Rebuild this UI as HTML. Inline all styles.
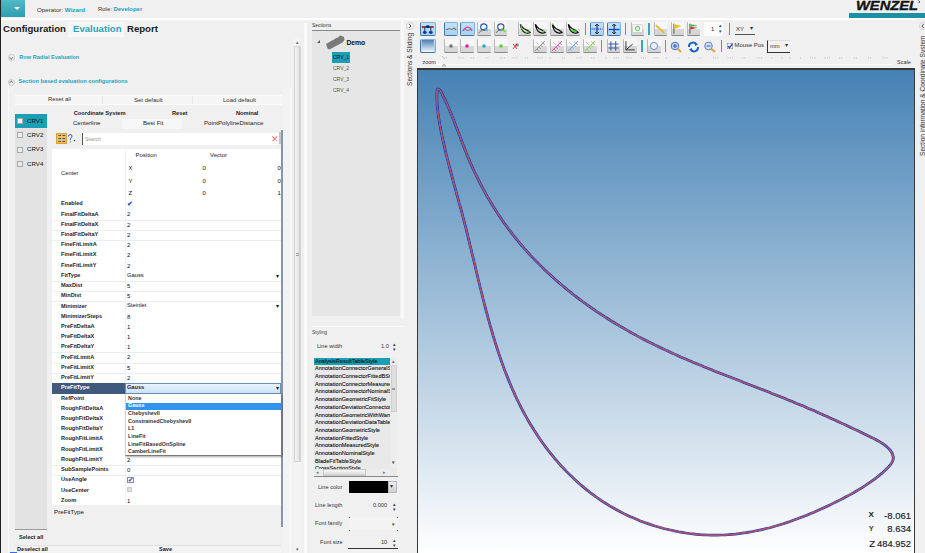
<!DOCTYPE html>
<html><head><meta charset="utf-8">
<style>
*{box-sizing:border-box;margin:0;padding:0}
html,body{width:925px;height:553px;overflow:hidden;background:#f0f0f0;font-family:"Liberation Sans",sans-serif;color:#222}
.a{position:absolute}
.t{position:absolute;white-space:nowrap;line-height:1}
</style></head><body>
<div class="a" style="left:0;top:0;width:925px;height:553px;overflow:hidden">
<div class="a" style="left:0px;top:0px;width:1px;height:553px;background:#202020"></div>
<div class="a" style="left:1px;top:0px;width:24px;height:17px;background:linear-gradient(#52b8c6,#2c9fb0)"></div>
<div class="a" style="left:14px;top:7px;width:0;height:0;border-left:3px solid transparent;border-right:3px solid transparent;border-top:3px solid #fff"></div>
<div class="t" style="left:37px;top:6.60px;font-size:6.2px;color:#333;">Operator: <span style="color:#1a9fb5;font-weight:bold">Wizard</span></div>
<div class="t" style="left:98px;top:6.72px;font-size:5.95px;color:#333;">Role: <span style="color:#1a9fb5;font-weight:bold">Developer</span></div>
<div class="a" style="left:1px;top:18px;width:924px;height:1.5px;background:#fff"></div>
<svg class="a" style="left:850px;top:0" width="75" height="12" viewBox="0 0 75 12"><text x="6" y="10.2" font-family="Liberation Sans" font-weight="bold" font-style="italic" font-size="12" textLength="62" lengthAdjust="spacingAndGlyphs" fill="#151515" stroke="#151515" stroke-width="0.35">WENZEL</text><path d="M68.5 0.5 Q70 1 69 3" stroke="#151515" stroke-width="0.9" fill="none"/></svg>
<div class="a" style="left:849px;top:12.5px;width:76px;height:5px;background:#1a90a5"></div>
<div class="a" style="left:68px;top:22px;width:56px;height:15px;background:#f7f7f7"></div>
<div class="t" style="left:3px;top:24.20px;font-size:9.6px;font-weight:bold;color:#1a1a1a;">Configuration</div>
<div class="t" style="left:73px;top:24.20px;font-size:9.6px;font-weight:bold;color:#2aa3b8;">Evaluation</div>
<div class="t" style="left:127px;top:24.20px;font-size:9.6px;font-weight:bold;color:#1a1a1a;">Report</div>
<div class="a" style="left:8px;top:54px;width:7px;height:7px;border:1px solid #c8c8c8;border-radius:50%"></div>
<div class="a" style="left:10.3px;top:55.5px;width:2.5px;height:2.5px;border-right:1px solid #888;border-bottom:1px solid #888;transform:rotate(45deg)"></div>
<div class="t" style="left:19.3px;top:54.70px;font-size:5.6px;font-weight:bold;color:#2aa3b8;">Row Radial Evaluation</div>
<div class="a" style="left:8px;top:78.5px;width:7px;height:7px;border:1px solid #c8c8c8;border-radius:50%"></div>
<div class="a" style="left:10.3px;top:81px;width:2.5px;height:2.5px;border-left:1px solid #888;border-top:1px solid #888;transform:rotate(45deg)"></div>
<div class="t" style="left:18.4px;top:79.25px;font-size:5.7px;font-weight:bold;color:#2aa3b8;">Section based evaluation configurations</div>
<div class="a" style="left:8px;top:88px;width:1.2px;height:465px;background:#f9f9f9"></div>
<div class="a" style="left:15px;top:94.7px;width:267px;height:10px;background:#f5f5f5;border-top:1px solid #fbfbfb;border-bottom:1px solid #fbfbfb"></div>
<div class="a" style="left:102px;top:96px;width:1px;height:8px;background:#e8e8e8"></div>
<div class="a" style="left:192px;top:96px;width:1px;height:8px;background:#e8e8e8"></div>
<div class="t" style="left:48px;top:97.05px;font-size:5.9px;color:#333;">Reset all</div>
<div class="t" style="left:134px;top:97.00px;font-size:6px;color:#333;">Set default</div>
<div class="t" style="left:223px;top:97.00px;font-size:6px;color:#333;">Load default</div>
<div class="a" style="left:15px;top:113.7px;width:32px;height:416px;background:#e3e3e3"></div>
<div class="a" style="left:15px;top:529.3px;width:32px;height:1px;background:#9a9a9a"></div>
<div class="a" style="left:15px;top:113.7px;width:32px;height:14.2px;background:#1a9fb5"></div>
<div class="a" style="left:16.9px;top:117.8px;width:6px;height:6px;border:1px solid #a8a8a8;background:#f4f4f4"></div>
<div class="t" style="left:27px;top:117.70px;font-size:6.2px;color:#111;">CRV1</div>
<div class="a" style="left:16.9px;top:131.7px;width:6px;height:6px;border:1px solid #a8a8a8;background:#ececec"></div>
<div class="t" style="left:27px;top:131.60px;font-size:6.2px;color:#111;">CRV2</div>
<div class="a" style="left:16.9px;top:146.5px;width:6px;height:6px;border:1px solid #a8a8a8;background:#ececec"></div>
<div class="t" style="left:27px;top:146.40px;font-size:6.2px;color:#111;">CRV3</div>
<div class="a" style="left:16.9px;top:160.7px;width:6px;height:6px;border:1px solid #a8a8a8;background:#ececec"></div>
<div class="t" style="left:27px;top:160.60px;font-size:6.2px;color:#111;">CRV4</div>
<div class="t" style="left:73.7px;top:111.15px;font-size:5.7px;font-weight:bold;color:#222;">Coordinate System</div>
<div class="t" style="left:172px;top:111.15px;font-size:5.7px;font-weight:bold;color:#222;">Reset</div>
<div class="t" style="left:236px;top:111.15px;font-size:5.7px;font-weight:bold;color:#222;">Nominal</div>
<div class="a" style="left:121.5px;top:118.5px;width:60.5px;height:10px;background:#f7f7f7"></div>
<div class="t" style="left:73px;top:120.00px;font-size:6px;color:#222;">Centerline</div>
<div class="t" style="left:143px;top:120.00px;font-size:6px;color:#222;">Best Fit</div>
<div class="t" style="left:204px;top:119.92px;font-size:6.15px;color:#222;">PointPolylineDistance</div>
<div class="a" style="left:52px;top:130px;width:229px;height:17px;background:#f0f0f0"></div>
<svg class="a" style="left:56px;top:133px" width="22" height="11" viewBox="0 0 22 11"><rect x="0" y="0" width="11" height="11" fill="#f0c060"/><rect x="0.5" y="0.5" width="10" height="10" fill="none" stroke="#e0a030" stroke-width="1"/><path d="M2.5 2.5 H5 M2.5 5.5 H5 M2.5 8.5 H5 M6.5 2.5 H9 M6.5 5.5 H9 M6.5 8.5 H9" stroke="#2050a0" stroke-width="1.2"/><path d="M12.5 3.5 Q12.5 1.5 14.2 1.5 Q16 1.5 16 3.2 Q16 4.5 14.3 5.3 L14.3 7" stroke="#3060c0" stroke-width="1" fill="none"/><circle cx="14.3" cy="8.8" r="0.6" fill="#3060c0"/><path d="M17.5 7 L19.5 7 L18.5 8.5 Z" fill="#333"/></svg>
<div class="a" style="left:82px;top:132.7px;width:197px;height:12.7px;background:#fff;border-left:1px solid #555"></div>
<div class="t" style="left:85px;top:136.50px;font-size:5px;color:#999;">Search</div>
<div class="t" style="left:270.5px;top:134.50px;font-size:9px;color:#e87070;">&#10005;</div>
<div class="a" style="left:280.8px;top:130px;width:2.2px;height:396.5px;background:#8496ae"></div>
<div class="a" style="left:279.2px;top:132px;width:1.6px;height:12px;background:#c4c4c4"></div>
<div class="a" style="left:52px;top:149px;width:228.5px;height:355.7px;background:#fff"></div>
<div class="a" style="left:124.5px;top:149px;width:1px;height:355.7px;background:#f1f1f1"></div>
<div class="t" style="left:135.5px;top:152.40px;font-size:6px;color:#222;">Position</div>
<div class="t" style="left:210px;top:152.40px;font-size:6px;color:#222;">Vector</div>
<div class="t" style="left:61px;top:171.40px;font-size:5.8px;color:#222;">Center</div>
<div class="t" style="left:128.5px;top:164.80px;font-size:6px;color:#111;">X</div>
<div class="t" style="left:202.5px;top:164.80px;font-size:6px;color:#111;">0</div>
<div class="t" style="left:277.5px;top:164.80px;font-size:6px;color:#111;">0</div>
<div class="t" style="left:128.5px;top:177.80px;font-size:6px;color:#111;">Y</div>
<div class="t" style="left:202.5px;top:177.80px;font-size:6px;color:#111;">0</div>
<div class="t" style="left:277.5px;top:177.80px;font-size:6px;color:#111;">0</div>
<div class="t" style="left:128.5px;top:190.00px;font-size:6px;color:#111;">Z</div>
<div class="t" style="left:202.5px;top:190.00px;font-size:6px;color:#111;">0</div>
<div class="t" style="left:277.5px;top:190.00px;font-size:6px;color:#111;">1</div>
<div class="t" style="left:61px;top:201.38px;font-size:5.6px;font-weight:bold;color:#1e1e1e;">Enabled</div>
<div class="t" style="left:127px;top:200.93px;font-size:6.5px;font-weight:bold;color:#3050c0;">&#10004;</div>
<div class="t" style="left:61px;top:211.60px;font-size:5.6px;font-weight:bold;color:#1e1e1e;">FinalFitDeltaA</div>
<div class="t" style="left:127px;top:211.40px;font-size:6px;color:#111;">2</div>
<div class="a" style="left:52px;top:219.51px;width:228.5px;height:1px;background:#ededed"></div>
<div class="t" style="left:61px;top:221.82px;font-size:5.6px;font-weight:bold;color:#1e1e1e;">FinalFitDeltaX</div>
<div class="t" style="left:127px;top:221.62px;font-size:6px;color:#111;">2</div>
<div class="a" style="left:52px;top:229.73px;width:228.5px;height:1px;background:#ededed"></div>
<div class="t" style="left:61px;top:232.04px;font-size:5.6px;font-weight:bold;color:#1e1e1e;">FinalFitDeltaY</div>
<div class="t" style="left:127px;top:231.84px;font-size:6px;color:#111;">2</div>
<div class="a" style="left:52px;top:239.95px;width:228.5px;height:1px;background:#ededed"></div>
<div class="t" style="left:61px;top:242.26px;font-size:5.6px;font-weight:bold;color:#1e1e1e;">FineFitLimitA</div>
<div class="t" style="left:127px;top:242.06px;font-size:6px;color:#111;">2</div>
<div class="t" style="left:61px;top:252.48px;font-size:5.6px;font-weight:bold;color:#1e1e1e;">FineFitLimitX</div>
<div class="t" style="left:127px;top:252.28px;font-size:6px;color:#111;">2</div>
<div class="t" style="left:61px;top:262.70px;font-size:5.6px;font-weight:bold;color:#1e1e1e;">FineFitLimitY</div>
<div class="t" style="left:127px;top:262.50px;font-size:6px;color:#111;">2</div>
<div class="t" style="left:61px;top:272.92px;font-size:5.6px;font-weight:bold;color:#1e1e1e;">FitType</div>
<div class="t" style="left:127px;top:272.82px;font-size:5.8px;color:#111;">Gauss</div>
<div class="t" style="left:276px;top:272.72px;font-size:6px;color:#111;">&#9662;</div>
<div class="a" style="left:52px;top:280.83px;width:228.5px;height:1px;background:#ededed"></div>
<div class="t" style="left:61px;top:283.14px;font-size:5.6px;font-weight:bold;color:#1e1e1e;">MaxDist</div>
<div class="t" style="left:127px;top:282.94px;font-size:6px;color:#111;">5</div>
<div class="a" style="left:52px;top:291.05px;width:228.5px;height:1px;background:#ededed"></div>
<div class="t" style="left:61px;top:293.36px;font-size:5.6px;font-weight:bold;color:#1e1e1e;">MinDist</div>
<div class="t" style="left:127px;top:293.16px;font-size:6px;color:#111;">5</div>
<div class="a" style="left:52px;top:301.27px;width:228.5px;height:1px;background:#ededed"></div>
<div class="t" style="left:61px;top:303.58px;font-size:5.6px;font-weight:bold;color:#1e1e1e;">Minimizer</div>
<div class="t" style="left:127px;top:303.48px;font-size:5.8px;color:#111;">Steinlet</div>
<div class="t" style="left:276px;top:303.38px;font-size:6px;color:#111;">&#9662;</div>
<div class="t" style="left:61px;top:313.80px;font-size:5.6px;font-weight:bold;color:#1e1e1e;">MinimizerSteps</div>
<div class="t" style="left:127px;top:313.60px;font-size:6px;color:#111;">8</div>
<div class="t" style="left:61px;top:324.02px;font-size:5.6px;font-weight:bold;color:#1e1e1e;">PreFitDeltaA</div>
<div class="t" style="left:127px;top:323.82px;font-size:6px;color:#111;">1</div>
<div class="t" style="left:61px;top:334.24px;font-size:5.6px;font-weight:bold;color:#1e1e1e;">PreFitDeltaX</div>
<div class="t" style="left:127px;top:334.04px;font-size:6px;color:#111;">1</div>
<div class="t" style="left:61px;top:344.46px;font-size:5.6px;font-weight:bold;color:#1e1e1e;">PreFitDeltaY</div>
<div class="t" style="left:127px;top:344.26px;font-size:6px;color:#111;">1</div>
<div class="a" style="left:52px;top:352.37px;width:228.5px;height:1px;background:#ededed"></div>
<div class="t" style="left:61px;top:354.68px;font-size:5.6px;font-weight:bold;color:#1e1e1e;">PreFitLimitA</div>
<div class="t" style="left:127px;top:354.48px;font-size:6px;color:#111;">2</div>
<div class="a" style="left:52px;top:362.59000000000003px;width:228.5px;height:1px;background:#ededed"></div>
<div class="t" style="left:61px;top:364.90px;font-size:5.6px;font-weight:bold;color:#1e1e1e;">PreFitLimitX</div>
<div class="t" style="left:127px;top:364.70px;font-size:6px;color:#111;">5</div>
<div class="a" style="left:52px;top:372.81px;width:228.5px;height:1px;background:#ededed"></div>
<div class="t" style="left:61px;top:375.12px;font-size:5.6px;font-weight:bold;color:#1e1e1e;">PreFitLimitY</div>
<div class="t" style="left:127px;top:374.92px;font-size:6px;color:#111;">2</div>
<div class="a" style="left:52px;top:383.33px;width:72.5px;height:10.620000000000001px;background:#405a7e"></div>
<div class="t" style="left:61px;top:385.34px;font-size:5.6px;font-weight:bold;color:#fff;">PreFitType</div>
<div class="a" style="left:124.5px;top:383.33px;width:156.0px;height:10.620000000000001px;background:linear-gradient(#e8f3fc,#c9e2f6);border:1px solid #6b8fb5"></div>
<div class="t" style="left:127px;top:385.34px;font-size:5.6px;font-weight:bold;color:#222;">Gauss</div>
<div class="t" style="left:275.5px;top:385.14px;font-size:6px;color:#222;">&#9662;</div>
<div class="t" style="left:61px;top:395.56px;font-size:5.6px;font-weight:bold;color:#1e1e1e;">RefPoint</div>
<div class="t" style="left:61px;top:405.78px;font-size:5.6px;font-weight:bold;color:#1e1e1e;">RoughFitDeltaA</div>
<div class="t" style="left:127px;top:405.58px;font-size:6px;color:#111;">2</div>
<div class="t" style="left:61px;top:416.00px;font-size:5.6px;font-weight:bold;color:#1e1e1e;">RoughFitDeltaX</div>
<div class="t" style="left:127px;top:415.80px;font-size:6px;color:#111;">2</div>
<div class="t" style="left:61px;top:426.22px;font-size:5.6px;font-weight:bold;color:#1e1e1e;">RoughFitDeltaY</div>
<div class="t" style="left:127px;top:426.02px;font-size:6px;color:#111;">2</div>
<div class="t" style="left:61px;top:436.44px;font-size:5.6px;font-weight:bold;color:#1e1e1e;">RoughFitLimitA</div>
<div class="t" style="left:127px;top:436.24px;font-size:6px;color:#111;">2</div>
<div class="t" style="left:61px;top:446.66px;font-size:5.6px;font-weight:bold;color:#1e1e1e;">RoughFitLimitX</div>
<div class="t" style="left:127px;top:446.46px;font-size:6px;color:#111;">2</div>
<div class="t" style="left:61px;top:456.88px;font-size:5.6px;font-weight:bold;color:#1e1e1e;">RoughFitLimitY</div>
<div class="t" style="left:127px;top:456.68px;font-size:6px;color:#111;">2</div>
<div class="a" style="left:52px;top:464.79px;width:228.5px;height:1px;background:#ededed"></div>
<div class="t" style="left:61px;top:467.10px;font-size:5.6px;font-weight:bold;color:#1e1e1e;">SubSamplePoints</div>
<div class="t" style="left:127px;top:466.90px;font-size:6px;color:#111;">0</div>
<div class="a" style="left:52px;top:475.01px;width:228.5px;height:1px;background:#ededed"></div>
<div class="t" style="left:61px;top:477.32px;font-size:5.6px;font-weight:bold;color:#1e1e1e;">UseAngle</div>
<div class="a" style="left:127px;top:476.72px;width:6.5px;height:6.5px;background:#fff;border:1px solid #8a8aa8"></div>
<div class="t" style="left:127.6px;top:477.12px;font-size:6px;font-weight:bold;color:#3050c0;">&#10004;</div>
<div class="t" style="left:61px;top:487.54px;font-size:5.6px;font-weight:bold;color:#1e1e1e;">UseCenter</div>
<div class="a" style="left:127px;top:487.34000000000003px;width:5px;height:5px;background:#ddd;border:1px solid #ccc"></div>
<div class="t" style="left:61px;top:497.76px;font-size:5.6px;font-weight:bold;color:#1e1e1e;">Zoom</div>
<div class="t" style="left:127px;top:497.56px;font-size:6px;color:#111;">1</div>
<div class="a" style="left:125px;top:394px;width:156.5px;height:62.3px;background:#fff;border:1px solid #7a7a7a;border-left:1px solid #d0d0d0;border-top:none;box-shadow:1px 1px 2px rgba(0,0,0,.35)"></div>
<div class="t" style="left:128px;top:395.80px;font-size:5.4px;font-weight:bold;color:#333;">None</div>
<div class="a" style="left:126px;top:402.54999999999995px;width:155px;height:7.2px;background:#3394f0"></div>
<div class="t" style="left:128px;top:403.45px;font-size:5.4px;font-weight:bold;color:#fff;">Gauss</div>
<div class="t" style="left:128px;top:411.10px;font-size:5.4px;font-weight:bold;color:#333;">ChebyshevII</div>
<div class="t" style="left:128px;top:418.75px;font-size:5.4px;font-weight:bold;color:#333;">ConstrainedChebyshevII</div>
<div class="t" style="left:128px;top:426.40px;font-size:5.4px;font-weight:bold;color:#333;">L1</div>
<div class="t" style="left:128px;top:434.05px;font-size:5.4px;font-weight:bold;color:#333;">LineFit</div>
<div class="t" style="left:128px;top:441.70px;font-size:5.4px;font-weight:bold;color:#333;">LineFitBasedOnSpline</div>
<div class="t" style="left:128px;top:449.35px;font-size:5.4px;font-weight:bold;color:#333;">CamberLineFit</div>
<div class="t" style="left:54px;top:509.40px;font-size:6.2px;color:#111;">PreFitType</div>
<div class="t" style="left:19px;top:535.20px;font-size:5.6px;font-weight:bold;color:#222;">Select all</div>
<div class="a" style="left:15px;top:544.7px;width:266px;height:1px;background:#e2e2e2"></div>
<div class="a" style="left:15px;top:545.7px;width:266px;height:8px;background:#f3f3f3"></div>
<div class="t" style="left:17px;top:546.70px;font-size:5.6px;font-weight:bold;color:#222;">Deselect all</div>
<div class="a" style="left:9.5px;top:551.6px;width:7px;height:1.4px;background:#3a6fd0"></div>
<div class="t" style="left:159px;top:546.70px;font-size:5.6px;font-weight:bold;color:#222;">Save</div>
<div class="a" style="left:293.5px;top:38px;width:7.5px;height:515px;background:#f3f3f3"></div>
<div class="a" style="left:283px;top:88px;width:9px;height:465px;background:#f3f3f3"></div>
<div class="a" style="left:289.5px;top:88px;width:1px;height:465px;background:#fafafa"></div>
<div class="t" style="left:295.5px;top:39.50px;font-size:5px;color:#666;">&#9652;</div>
<div class="a" style="left:293.8px;top:46px;width:7.2px;height:416px;background:linear-gradient(90deg,#f6f6f6,#e4e4e4 70%,#c8c8c8);border:1px solid #d4d4d4"></div>
<div class="a" style="left:296px;top:253px;width:3px;height:0.8px;background:#a0a0a0"></div>
<div class="a" style="left:296px;top:255px;width:3px;height:0.8px;background:#a0a0a0"></div>
<div class="t" style="left:295.5px;top:546.50px;font-size:5px;color:#666;">&#9662;</div>
<div class="a" style="left:303.6px;top:22.5px;width:3.8px;height:531px;background:#fbfbfb"></div>
<div class="t" style="left:312px;top:23.20px;font-size:5px;color:#333;">Sections</div>
<div class="a" style="left:312px;top:30px;width:88px;height:1px;background:#888"></div>
<div class="a" style="left:312px;top:31px;width:88px;height:284.5px;background:#e6e6e6"></div>
<div class="a" style="left:317px;top:39.5px;width:0;height:0;border-left:3px solid transparent;border-bottom:3px solid #555"></div>
<svg class="a" style="left:325px;top:34px" width="21" height="16" viewBox="0 0 21 16"><path d="M1 10 L7 6.5 L9 5.5 L11 4 L13 3.5 L15 1.5 L17 2 L19 3 L19.5 6 L17.5 8.5 L10 12.5 L4.5 15.5 L2.5 14.5 Z" fill="#7a7a7a"/></svg>
<div class="t" style="left:346.4px;top:39.90px;font-size:6.8px;font-weight:bold;color:#111;">Demo</div>
<div class="a" style="left:331.8px;top:52.2px;width:18.7px;height:10.5px;background:#1a9fb5"></div>
<div class="t" style="left:333px;top:55.00px;font-size:5px;color:#111;">CRV_1</div>
<div class="t" style="left:333px;top:66.40px;font-size:5px;color:#555;">CRV_2</div>
<div class="t" style="left:333px;top:76.90px;font-size:5px;color:#555;">CRV_3</div>
<div class="t" style="left:333px;top:87.90px;font-size:5px;color:#555;">CRV_4</div>
<div class="a" style="left:401px;top:19px;width:3px;height:300px;background:#f8f8f8"></div>
<div class="a" style="left:312px;top:326px;width:93px;height:1.2px;background:#fafafa"></div>
<div class="t" style="left:312px;top:329.90px;font-size:5px;color:#444;">Styling</div>
<div class="t" style="left:317px;top:344.00px;font-size:5.6px;color:#333;">Line width</div>
<div class="t" style="left:381px;top:344.00px;font-size:5.6px;color:#333;">1.0</div>
<div class="t" style="left:392.5px;top:342.00px;font-size:5px;color:#333;">&#9652;</div>
<div class="t" style="left:392.5px;top:347.00px;font-size:5px;color:#333;">&#9662;</div>
<div class="a" style="left:314px;top:357.8px;width:83px;height:118.6px;background:#e9e9e9"></div>
<div class="a" style="left:314px;top:476px;width:84px;height:1px;background:#888"></div>
<div class="a" style="left:314px;top:357.8px;width:76px;height:111px;overflow:hidden">
<div class="a" style="left:0;top:0.20px;width:75.6px;height:7px;background:#1a9fb5"></div>
<div class="t" style="left:1px;top:0.90px;font-size:5.6px;color:#111;-webkit-text-stroke:0.1px #111">AnalysisResultTableStyle</div>
<div class="t" style="left:1px;top:8.60px;font-size:5.6px;color:#111;-webkit-text-stroke:0.1px #111">AnnotationConnectorGeneralStyle</div>
<div class="t" style="left:1px;top:16.30px;font-size:5.6px;color:#111;-webkit-text-stroke:0.1px #111">AnnotationConnectorFittedBStyle</div>
<div class="t" style="left:1px;top:24.00px;font-size:5.6px;color:#111;-webkit-text-stroke:0.1px #111">AnnotationConnectorMeasuredStyle</div>
<div class="t" style="left:1px;top:31.70px;font-size:5.6px;color:#111;-webkit-text-stroke:0.1px #111">AnnotationConnectorNominalStyle</div>
<div class="t" style="left:1px;top:39.40px;font-size:5.6px;color:#111;-webkit-text-stroke:0.1px #111">AnnotationGeometricFitStyle</div>
<div class="t" style="left:1px;top:47.10px;font-size:5.6px;color:#111;-webkit-text-stroke:0.1px #111">AnnotationDeviationConnectorStyle</div>
<div class="t" style="left:1px;top:54.80px;font-size:5.6px;color:#111;-webkit-text-stroke:0.1px #111">AnnotationGeometricWithWarning</div>
<div class="t" style="left:1px;top:62.50px;font-size:5.6px;color:#111;-webkit-text-stroke:0.1px #111">AnnotationDeviationDataTable</div>
<div class="t" style="left:1px;top:70.20px;font-size:5.6px;color:#111;-webkit-text-stroke:0.1px #111">AnnotationGeometricStyle</div>
<div class="t" style="left:1px;top:77.90px;font-size:5.6px;color:#111;-webkit-text-stroke:0.1px #111">AnnotationFittedStyle</div>
<div class="t" style="left:1px;top:85.60px;font-size:5.6px;color:#111;-webkit-text-stroke:0.1px #111">AnnotationMeasuredStyle</div>
<div class="t" style="left:1px;top:93.30px;font-size:5.6px;color:#111;-webkit-text-stroke:0.1px #111">AnnotationNominalStyle</div>
<div class="t" style="left:1px;top:101.00px;font-size:5.6px;color:#111;-webkit-text-stroke:0.1px #111">BladeFitTableStyle</div>
<div class="t" style="left:1px;top:108.70px;font-size:5.6px;color:#111;-webkit-text-stroke:0.1px #111">CrossSectionStyle</div>
</div>
<div class="t" style="left:391.5px;top:358.50px;font-size:5px;color:#666;">&#9652;</div>
<div class="a" style="left:390.5px;top:357.8px;width:6.5px;height:110px;background:#ededed"></div>
<div class="a" style="left:391px;top:364.8px;width:5.5px;height:47.7px;background:#dedede;border:1px solid #d0d0d0"></div>
<div class="a" style="left:392.3px;top:387.5px;width:3px;height:0.7px;background:#999"></div>
<div class="a" style="left:392.3px;top:389.2px;width:3px;height:0.7px;background:#999"></div>
<div class="t" style="left:391.5px;top:358.50px;font-size:5px;color:#666;">&#9652;</div>
<div class="t" style="left:391.5px;top:459.50px;font-size:5px;color:#666;">&#9662;</div>
<div class="t" style="left:391.5px;top:459.50px;font-size:5px;color:#666;">&#9662;</div>
<div class="a" style="left:314px;top:468.5px;width:76px;height:7px;background:#ececec"></div>
<div class="a" style="left:322.8px;top:468.7px;width:43.6px;height:7px;background:linear-gradient(#fafafa,#d4d4d4);border:1px solid #c8c8c8"></div>
<div class="t" style="left:316px;top:469.50px;font-size:5px;color:#777;">&#9666;</div>
<div class="t" style="left:383px;top:469.50px;font-size:5px;color:#777;">&#9656;</div>
<div class="t" style="left:318px;top:484.60px;font-size:5.6px;color:#333;">Line color</div>
<div class="a" style="left:349.3px;top:481px;width:38.3px;height:11.6px;background:#000"></div>
<div class="a" style="left:388px;top:481px;width:9px;height:11.6px;background:linear-gradient(#eee,#d0d0d0);border:1px solid #bbb"></div>
<div class="t" style="left:389.5px;top:484.45px;font-size:5.5px;color:#333;">&#9662;</div>
<div class="t" style="left:315px;top:503.40px;font-size:5.6px;color:#333;">Line length</div>
<div class="t" style="left:373px;top:503.40px;font-size:5.6px;color:#333;">0.000</div>
<div class="t" style="left:392.5px;top:501.50px;font-size:5px;color:#333;">&#9652;</div>
<div class="t" style="left:392.5px;top:506.50px;font-size:5px;color:#333;">&#9662;</div>
<div class="t" style="left:315px;top:521.20px;font-size:5.6px;color:#333;">Font family</div>
<div class="a" style="left:349px;top:517px;width:49px;height:13px;background:#f3f3f3"></div>
<div class="a" style="left:349px;top:517px;width:1px;height:1.2px;background:#666"></div>
<div class="a" style="left:397px;top:517px;width:1px;height:1.2px;background:#666"></div>
<div class="a" style="left:349px;top:529.5px;width:1px;height:1.2px;background:#666"></div>
<div class="a" style="left:397px;top:529.5px;width:1px;height:1.2px;background:#666"></div>
<div class="t" style="left:392px;top:521.50px;font-size:5px;color:#333;">&#9662;</div>
<div class="t" style="left:320px;top:539.70px;font-size:5.6px;color:#333;">Font size</div>
<div class="t" style="left:381px;top:539.70px;font-size:5.6px;color:#333;">10</div>
<div class="t" style="left:392.5px;top:538.00px;font-size:5px;color:#444;">&#9652;</div>
<div class="t" style="left:392.5px;top:543.00px;font-size:5px;color:#444;">&#9662;</div>
<div class="a" style="left:348px;top:547.5px;width:50px;height:1.2px;background:#333"></div>
<div class="a" style="left:405.5px;top:22.3px;width:8px;height:8px;border:1px solid #d0d0d0;border-radius:50%;background:#f6f6f6"></div>
<svg class="a" style="left:405.5px;top:22.3px" width="8" height="8" viewBox="0 0 8 8"><path d="M3.2 2.2 L5 4 L3.2 5.8" stroke="#333" stroke-width="1" fill="none"/></svg>
<div class="t" style="left:407.2px;top:86px;font-size:6.6px;color:#333;transform:rotate(-90deg);transform-origin:0 0">Sections &amp; Sliding</div>
<div class="a" style="left:420.2px;top:21.5px;width:15.6px;height:14px;background:linear-gradient(#c2e2f6,#a6d2f0);border:1px solid #7fb0dc;border-left:1.3px solid #3f74a8;border-bottom:1.5px solid #3f74a8;border-radius:2px"></div>
<svg class="a" style="left:420.2px;top:21.5px" width="15.6" height="14" viewBox="0 0 14 14"><path d="M2 5 L12 5" stroke="#222" stroke-width="1.3"/><path d="M4 5 L4 9.5 M10 5 L10 9.5" stroke="#333" stroke-width="1"/><ellipse cx="4" cy="10.5" rx="1.9" ry="1.4" fill="#1030c0"/><ellipse cx="10" cy="10.5" rx="1.9" ry="1.4" fill="#1030c0"/><ellipse cx="7" cy="4.6" rx="1.8" ry="1.3" fill="#0a1a80"/><circle cx="1.8" cy="5" r="0.9" fill="#d02020"/><circle cx="12.2" cy="5" r="0.9" fill="#d02020"/></svg>
<div class="a" style="left:444.2px;top:21.5px;width:14.2px;height:14px;background:linear-gradient(#c2e2f6,#a6d2f0);border:1px solid #7fb0dc;border-left:1.3px solid #3f74a8;border-bottom:1.5px solid #3f74a8;border-radius:2px"></div>
<svg class="a" style="left:444.2px;top:21.5px" width="14.2" height="14" viewBox="0 0 14 14"><path d="M2 8 L5 6.5 L8 7.5 L10 6 L12 8" stroke="#777" stroke-width="1.1" fill="none"/></svg>
<div class="a" style="left:460.4px;top:21.5px;width:14.3px;height:14px;background:linear-gradient(#c2e2f6,#a6d2f0);border:1px solid #7fb0dc;border-left:1.3px solid #3f74a8;border-bottom:1.5px solid #3f74a8;border-radius:2px"></div>
<svg class="a" style="left:460.4px;top:21.5px" width="14.3" height="14" viewBox="0 0 14 14"><path d="M2 9 L5 7.5 L8 8.5 L12 7" stroke="#777" stroke-width="1" fill="none"/><path d="M3 8 L7 5 L10 6 L12 9" stroke="#e040b0" stroke-width="1.3" fill="none"/></svg>
<div class="a" style="left:477.3px;top:21.5px;width:13.6px;height:14px;background:linear-gradient(#f7f7f7 0,#f7f7f7 52%,#d8d8d8 52%,#d4d4d4);border-bottom:1.3px solid #8a8a8a;border-left:1px solid #b8b8b8;border-radius:1px"></div>
<svg class="a" style="left:477.3px;top:21.5px" width="13.6" height="14" viewBox="0 0 14 14"><circle cx="7" cy="5" r="3.2" stroke="#3050b0" stroke-width="1.2" fill="none"/><path d="M2 11 L5 8 L9 7" stroke="#666" stroke-width="1" fill="none"/><path d="M8 6 L11 9" stroke="#30c8d8" stroke-width="1.5"/></svg>
<div class="a" style="left:493.5px;top:21.5px;width:13.6px;height:14px;background:linear-gradient(#f7f7f7 0,#f7f7f7 52%,#d8d8d8 52%,#d4d4d4);border-bottom:1.3px solid #8a8a8a;border-left:1px solid #b8b8b8;border-radius:1px"></div>
<svg class="a" style="left:493.5px;top:21.5px" width="13.6" height="14" viewBox="0 0 14 14"><circle cx="7" cy="5" r="3.2" stroke="#3050b0" stroke-width="1.2" fill="none"/><path d="M2 11 L5 8 L9 7" stroke="#666" stroke-width="1" fill="none"/><path d="M7 7 L12 10" stroke="#60e030" stroke-width="1.5"/></svg>
<div class="a" style="left:517.5px;top:21.5px;width:13.5px;height:14px;background:linear-gradient(#f7f7f7 0,#f7f7f7 52%,#d8d8d8 52%,#d4d4d4);border-bottom:1.3px solid #8a8a8a;border-left:1px solid #b8b8b8;border-radius:1px"></div>
<svg class="a" style="left:517.5px;top:21.5px" width="13.5" height="14" viewBox="0 0 14 14"><path d="M2.5 2 Q3 8 7 10.5 Q10 12 12.5 10.5 Q10 8 6 6.5 Q4 5 2.5 2 Z" stroke="#111" stroke-width="1.3" fill="none"/><path d="M3 2 Q3 8 7 10 Q10 11 12 10" stroke="#60e030" stroke-width="1" fill="none"/></svg>
<div class="a" style="left:533.2px;top:21.5px;width:13.5px;height:14px;background:linear-gradient(#f7f7f7 0,#f7f7f7 52%,#d8d8d8 52%,#d4d4d4);border-bottom:1.3px solid #8a8a8a;border-left:1px solid #b8b8b8;border-radius:1px"></div>
<svg class="a" style="left:533.2px;top:21.5px" width="13.5" height="14" viewBox="0 0 14 14"><path d="M2.5 2 Q3 8 7 10.5 Q10 12 12.5 10.5 Q10 8 6 6.5 Q4 5 2.5 2 Z" stroke="#111" stroke-width="1.3" fill="none"/><circle cx="11" cy="9.5" r="1" fill="#60e030"/></svg>
<div class="a" style="left:550px;top:21.5px;width:13.5px;height:14px;background:linear-gradient(#f7f7f7 0,#f7f7f7 52%,#d8d8d8 52%,#d4d4d4);border-bottom:1.3px solid #8a8a8a;border-left:1px solid #b8b8b8;border-radius:1px"></div>
<svg class="a" style="left:550px;top:21.5px" width="13.5" height="14" viewBox="0 0 14 14"><path d="M2.5 2 Q3 8 7 10.5 Q10 12 12.5 10.5 Q10 8 6 6.5 Q4 5 2.5 2 Z" stroke="#111" stroke-width="1.3" fill="none"/><circle cx="3" cy="2" r="0.9" fill="#60e030"/></svg>
<div class="a" style="left:566.3px;top:21.5px;width:13.5px;height:14px;background:linear-gradient(#f7f7f7 0,#f7f7f7 52%,#d8d8d8 52%,#d4d4d4);border-bottom:1.3px solid #8a8a8a;border-left:1px solid #b8b8b8;border-radius:1px"></div>
<svg class="a" style="left:566.3px;top:21.5px" width="13.5" height="14" viewBox="0 0 14 14"><path d="M2.5 2 Q3 8 7 10.5 Q10 12 12.5 10.5 Q10 8 6 6.5 Q4 5 2.5 2 Z" stroke="#111" stroke-width="1.3" fill="none"/><path d="M6 8 Q8 10 11 9.5" stroke="#40e020" stroke-width="2" fill="none"/></svg>
<div class="a" style="left:584.9px;top:22.5px;width:1.4px;height:12px;background:#3aa6b8"></div>
<div class="a" style="left:590px;top:21.5px;width:14px;height:14px;background:linear-gradient(#c2e2f6,#a6d2f0);border:1px solid #7fb0dc;border-left:1.3px solid #3f74a8;border-bottom:1.5px solid #3f74a8;border-radius:2px"></div>
<svg class="a" style="left:590px;top:21.5px" width="14" height="14" viewBox="0 0 14 14"><path d="M7 2 L7 12" stroke="#333" stroke-width="1.2"/><path d="M5 4 L7 2 L9 4 M5 10 L7 12 L9 10" stroke="#333" stroke-width="1" fill="none"/><path d="M1.5 7 L12.5 7" stroke="#1030e0" stroke-width="1" stroke-dasharray="1.3 0.8"/></svg>
<div class="a" style="left:606.5px;top:21.5px;width:14.3px;height:14px;background:linear-gradient(#c2e2f6,#a6d2f0);border:1px solid #7fb0dc;border-left:1.3px solid #3f74a8;border-bottom:1.5px solid #3f74a8;border-radius:2px"></div>
<svg class="a" style="left:606.5px;top:21.5px" width="14.3" height="14" viewBox="0 0 14 14"><path d="M7 2 L7 12" stroke="#333" stroke-width="1.2"/><path d="M5 4 L7 2 L9 4 M5 10 L7 12 L9 10" stroke="#333" stroke-width="1" fill="none"/><path d="M1.5 7.5 L12.5 7.5" stroke="#1040e0" stroke-width="1.3"/></svg>
<div class="a" style="left:624.6999999999999px;top:22.5px;width:1.4px;height:12px;background:#3aa6b8"></div>
<div class="a" style="left:630.5px;top:21.5px;width:13px;height:14px;background:linear-gradient(#f7f7f7 0,#f7f7f7 52%,#d8d8d8 52%,#d4d4d4);border-bottom:1.3px solid #8a8a8a;border-left:1px solid #b8b8b8;border-radius:1px"></div>
<svg class="a" style="left:630.5px;top:21.5px" width="13" height="14" viewBox="0 0 14 14"><rect x="2" y="2.5" width="10" height="8" fill="#fff" stroke="#bbb" stroke-width="0.6"/><circle cx="7" cy="6.5" r="2.3" stroke="#70d070" stroke-width="1.2" fill="none"/></svg>
<div class="a" style="left:648.1999999999999px;top:22.5px;width:1.4px;height:12px;background:#3aa6b8"></div>
<div class="a" style="left:654.3px;top:21.5px;width:12.9px;height:14px;background:linear-gradient(#f7f7f7 0,#f7f7f7 52%,#d8d8d8 52%,#d4d4d4);border-bottom:1.3px solid #8a8a8a;border-left:1px solid #b8b8b8;border-radius:1px"></div>
<svg class="a" style="left:654.3px;top:21.5px" width="12.9" height="14" viewBox="0 0 14 14"><path d="M2 3 L11 11" stroke="#e8b820" stroke-width="2"/></svg>
<div class="a" style="left:670.5px;top:21.5px;width:13.5px;height:14px;background:linear-gradient(#f7f7f7 0,#f7f7f7 52%,#d8d8d8 52%,#d4d4d4);border-bottom:1.3px solid #8a8a8a;border-left:1px solid #b8b8b8;border-radius:1px"></div>
<svg class="a" style="left:670.5px;top:21.5px" width="13.5" height="14" viewBox="0 0 14 14"><path d="M3 1.5 L3 12" stroke="#555" stroke-width="1"/><path d="M3.5 2 L11 4 L3.5 7 Z" fill="#f0c020"/></svg>
<div class="a" style="left:686.7px;top:21.5px;width:13.6px;height:14px;background:linear-gradient(#f7f7f7 0,#f7f7f7 52%,#d8d8d8 52%,#d4d4d4);border-bottom:1.3px solid #8a8a8a;border-left:1px solid #b8b8b8;border-radius:1px"></div>
<svg class="a" style="left:686.7px;top:21.5px" width="13.6" height="14" viewBox="0 0 14 14"><path d="M3 1.5 L3 12" stroke="#555" stroke-width="1"/><path d="M3.5 2 L11 3.5 L3.5 5 Z" fill="#30c040"/><path d="M3.5 5 L11 5.5 L3.5 7.5 Z" fill="#e02020"/></svg>
<div class="a" style="left:703.6px;top:21.5px;width:19.4px;height:14px;background:#fcfcfc"></div>
<div class="t" style="left:711px;top:25.50px;font-size:6px;color:#333;">1</div>
<div class="t" style="left:718.5px;top:23.00px;font-size:5px;color:#444;">&#9652;</div>
<div class="t" style="left:718.5px;top:29.00px;font-size:5px;color:#444;">&#9662;</div>
<div class="a" style="left:728.6px;top:22.5px;width:1.4px;height:12px;background:#3aa6b8"></div>
<div class="a" style="left:734.7px;top:22px;width:20.1px;height:13px;background:#f0f0f0;border-bottom:1px solid #555"></div>
<div class="t" style="left:736px;top:25.50px;font-size:6px;color:#333;">XY</div>
<div class="t" style="left:749.5px;top:25.75px;font-size:5.5px;color:#333;">&#9662;</div>
<div class="a" style="left:420.2px;top:39.4px;width:15.6px;height:14px;background:linear-gradient(#c2e2f6,#a6d2f0);border:1px solid #7fb0dc;border-left:1.3px solid #3f74a8;border-bottom:1.5px solid #3f74a8;border-radius:2px"></div>
<svg class="a" style="left:420.2px;top:39.4px" width="15.6" height="14" viewBox="0 0 14 14"><rect x="1" y="1" width="12" height="12" fill="url(#g1)"/><defs><linearGradient id="g1" x1="0" y1="0" x2="0" y2="1"><stop offset="0" stop-color="#4f80b4"/><stop offset="1" stop-color="#f4f8fc"/></linearGradient></defs></svg>
<div class="a" style="left:444.2px;top:39.4px;width:14px;height:14px;background:linear-gradient(#f7f7f7 0,#f7f7f7 52%,#d8d8d8 52%,#d4d4d4);border-bottom:1.3px solid #8a8a8a;border-left:1px solid #b8b8b8;border-radius:1px"></div>
<svg class="a" style="left:444.2px;top:39.4px" width="14" height="14" viewBox="0 0 14 14"><circle cx="7" cy="7" r="1.8" fill="#777"/></svg>
<div class="a" style="left:460.4px;top:39.4px;width:14px;height:14px;background:linear-gradient(#f7f7f7 0,#f7f7f7 52%,#d8d8d8 52%,#d4d4d4);border-bottom:1.3px solid #8a8a8a;border-left:1px solid #b8b8b8;border-radius:1px"></div>
<svg class="a" style="left:460.4px;top:39.4px" width="14" height="14" viewBox="0 0 14 14"><circle cx="7" cy="7" r="1.8" fill="#e020b0"/></svg>
<div class="a" style="left:477.3px;top:39.4px;width:14px;height:14px;background:linear-gradient(#f7f7f7 0,#f7f7f7 52%,#d8d8d8 52%,#d4d4d4);border-bottom:1.3px solid #8a8a8a;border-left:1px solid #b8b8b8;border-radius:1px"></div>
<svg class="a" style="left:477.3px;top:39.4px" width="14" height="14" viewBox="0 0 14 14"><circle cx="7" cy="7" r="1.8" fill="#20a8c8"/></svg>
<div class="a" style="left:493.5px;top:39.4px;width:14px;height:14px;background:linear-gradient(#f7f7f7 0,#f7f7f7 52%,#d8d8d8 52%,#d4d4d4);border-bottom:1.3px solid #8a8a8a;border-left:1px solid #b8b8b8;border-radius:1px"></div>
<svg class="a" style="left:493.5px;top:39.4px" width="14" height="14" viewBox="0 0 14 14"><circle cx="7" cy="7" r="1.8" fill="#60d030"/></svg>
<svg class="a" style="left:511px;top:41px" width="10" height="10" viewBox="0 0 10 10"><circle cx="6" cy="4" r="1.8" fill="#888"/><path d="M2 3 L6 8 M6 3 L2 8" stroke="#e02020" stroke-width="0.9"/></svg>
<div class="a" style="left:533.2px;top:39.4px;width:13.8px;height:14px;background:linear-gradient(#f7f7f7 0,#f7f7f7 52%,#d8d8d8 52%,#d4d4d4);border-bottom:1.3px solid #8a8a8a;border-left:1px solid #b8b8b8;border-radius:1px"></div>
<svg class="a" style="left:533.2px;top:39.4px" width="13.8" height="14" viewBox="0 0 14 14"><path d="M2 12 L12 2" stroke="#888" stroke-width="1"/><path d="M4 10 L6 12 M6 8 L8 10 M8 6 L10 8 M10 4 L12 6" stroke="#888" stroke-width="0.8"/><path d="M3 3 L6 6 M8 2 L12 6" stroke="#999" stroke-width="0.6"/></svg>
<div class="a" style="left:550px;top:39.4px;width:13.8px;height:14px;background:linear-gradient(#f7f7f7 0,#f7f7f7 52%,#d8d8d8 52%,#d4d4d4);border-bottom:1.3px solid #8a8a8a;border-left:1px solid #b8b8b8;border-radius:1px"></div>
<svg class="a" style="left:550px;top:39.4px" width="13.8" height="14" viewBox="0 0 14 14"><path d="M2 12 L12 2" stroke="#e040a0" stroke-width="1"/><path d="M4 10 L6 12 M6 8 L8 10 M8 6 L10 8 M10 4 L12 6" stroke="#e040a0" stroke-width="0.8"/><path d="M3 3 L6 6 M8 2 L12 6" stroke="#999" stroke-width="0.6"/></svg>
<div class="a" style="left:566.3px;top:39.4px;width:13.8px;height:14px;background:linear-gradient(#f7f7f7 0,#f7f7f7 52%,#d8d8d8 52%,#d4d4d4);border-bottom:1.3px solid #8a8a8a;border-left:1px solid #b8b8b8;border-radius:1px"></div>
<svg class="a" style="left:566.3px;top:39.4px" width="13.8" height="14" viewBox="0 0 14 14"><path d="M2 12 L12 2" stroke="#60a8e0" stroke-width="1"/><path d="M4 10 L6 12 M6 8 L8 10 M8 6 L10 8 M10 4 L12 6" stroke="#60a8e0" stroke-width="0.8"/><path d="M3 3 L6 6 M8 2 L12 6" stroke="#999" stroke-width="0.6"/></svg>
<div class="a" style="left:583px;top:39.4px;width:13.8px;height:14px;background:linear-gradient(#f7f7f7 0,#f7f7f7 52%,#d8d8d8 52%,#d4d4d4);border-bottom:1.3px solid #8a8a8a;border-left:1px solid #b8b8b8;border-radius:1px"></div>
<svg class="a" style="left:583px;top:39.4px" width="13.8" height="14" viewBox="0 0 14 14"><path d="M2 12 L12 2" stroke="#80d040" stroke-width="1"/><path d="M4 10 L6 12 M6 8 L8 10 M8 6 L10 8 M10 4 L12 6" stroke="#80d040" stroke-width="0.8"/><path d="M3 3 L6 6 M8 2 L12 6" stroke="#999" stroke-width="0.6"/></svg>
<div class="a" style="left:601.0px;top:40.4px;width:1.4px;height:12px;background:#3aa6b8"></div>
<div class="a" style="left:606.5px;top:39.4px;width:13.5px;height:14px;background:linear-gradient(#f7f7f7 0,#f7f7f7 52%,#d8d8d8 52%,#d4d4d4);border-bottom:1.3px solid #8a8a8a;border-left:1px solid #b8b8b8;border-radius:1px"></div>
<svg class="a" style="left:606.5px;top:39.4px" width="13.5" height="14" viewBox="0 0 14 14"><path d="M4 2 L4 12 M9 2 L9 12 M1.5 5 L12 5 M1.5 9 L12 9" stroke="#3a5fb0" stroke-width="1.1"/></svg>
<div class="a" style="left:623.4px;top:39.4px;width:13.6px;height:14px;background:linear-gradient(#f7f7f7 0,#f7f7f7 52%,#d8d8d8 52%,#d4d4d4);border-bottom:1.3px solid #8a8a8a;border-left:1px solid #b8b8b8;border-radius:1px"></div>
<svg class="a" style="left:623.4px;top:39.4px" width="13.6" height="14" viewBox="0 0 14 14"><path d="M3 2 L3 11 L12 11" stroke="#333" stroke-width="1" fill="none"/><path d="M3 11 L10 5" stroke="#333" stroke-width="1"/></svg>
<div class="a" style="left:641.1999999999999px;top:40.4px;width:1.4px;height:12px;background:#3aa6b8"></div>
<div class="a" style="left:646.5px;top:39.4px;width:14px;height:14px;background:linear-gradient(#f7f7f7 0,#f7f7f7 52%,#d8d8d8 52%,#d4d4d4);border-bottom:1.3px solid #8a8a8a;border-left:1px solid #b8b8b8;border-radius:1px"></div>
<svg class="a" style="left:646.5px;top:39.4px" width="14" height="14" viewBox="0 0 14 14"><circle cx="7" cy="7" r="3.6" stroke="#7090c0" stroke-width="1" fill="#eaf0f8"/></svg>
<div class="a" style="left:664.6999999999999px;top:40.4px;width:1.4px;height:12px;background:#3aa6b8"></div>
<svg class="a" style="left:670px;top:41px" width="14" height="12" viewBox="0 0 14 12"><circle cx="5" cy="5" r="3.8" fill="#bcd4f0" stroke="#4a78c0" stroke-width="1"/><path d="M3 5 L7 5 M5 3 L5 7" stroke="#2050b0" stroke-width="0.9"/><path d="M8 8 L11 11" stroke="#e8a020" stroke-width="1.8"/></svg>
<svg class="a" style="left:687px;top:41px" width="13" height="12" viewBox="0 0 13 12"><path d="M2 6 A4 4 0 0 1 9 3" stroke="#2060c0" stroke-width="2" fill="none"/><path d="M11 6 A4 4 0 0 1 4 9" stroke="#2060c0" stroke-width="2" fill="none"/><path d="M8 1 L11 3.5 L8 5 Z M5 7 L2 8.5 L5 11 Z" fill="#2060c0"/></svg>
<svg class="a" style="left:703px;top:41px" width="14" height="12" viewBox="0 0 14 12"><circle cx="5.5" cy="5" r="3.8" fill="#d4e2f4" stroke="#5a80c0" stroke-width="1"/><path d="M3.5 5 L7.5 5" stroke="#2050b0" stroke-width="0.9"/><path d="M8.5 8 L12 11" stroke="#e8a020" stroke-width="1.8"/></svg>
<div class="a" style="left:721.1px;top:40.4px;width:1.4px;height:12px;background:#3aa6b8"></div>
<svg class="a" style="left:726.9px;top:43px" width="6" height="6" viewBox="0 0 6 6"><rect x="0.3" y="0.3" width="5.4" height="5.4" fill="#fff" stroke="#888" stroke-width="0.6"/><path d="M1 3 L2.5 4.7 L5.5 1" stroke="#2a40b0" stroke-width="1.2" fill="none"/></svg>
<div class="t" style="left:734.5px;top:43.25px;font-size:5.9px;color:#333;">Mouse Pos</div>
<div class="a" style="left:766.7px;top:39.7px;width:22.9px;height:13px;background:#f2f2f2;border-left:1.5px solid #333;border-bottom:1.5px solid #333;border-top:1px solid #ddd"></div>
<div class="t" style="left:770px;top:43.60px;font-size:5.8px;color:#333;">mm</div>
<div class="t" style="left:784.5px;top:43.45px;font-size:5.5px;color:#333;">&#9662;</div>
<div class="t" style="left:422.5px;top:60.25px;font-size:5.5px;color:#333;">zoom</div>
<div class="t" style="left:897px;top:60.05px;font-size:5.5px;color:#333;">Scale</div>
<div class="a" style="left:436px;top:64px;width:457px;height:1.2px;background:#fafafa"></div>
<svg class="a" style="left:436px;top:55px" width="460" height="12">
<rect x="10.0" y="2" width="1" height="1.6" fill="#cfcfcf"/>
<rect x="22.2" y="2" width="1" height="1.6" fill="#cfcfcf"/>
<rect x="24.4" y="2" width="1" height="1.6" fill="#cfcfcf"/>
<rect x="26.6" y="2" width="1" height="1.6" fill="#cfcfcf"/>
<rect x="34.8" y="2" width="1" height="1.6" fill="#cfcfcf"/>
<rect x="37.0" y="2" width="1" height="1.6" fill="#cfcfcf"/>
<rect x="49.2" y="2" width="1" height="1.6" fill="#cfcfcf"/>
<rect x="51.4" y="2" width="1" height="1.6" fill="#cfcfcf"/>
<rect x="63.6" y="2" width="1" height="1.6" fill="#cfcfcf"/>
<rect x="65.8" y="2" width="1" height="1.6" fill="#cfcfcf"/>
<rect x="68.0" y="2" width="1" height="1.6" fill="#cfcfcf"/>
<rect x="76.2" y="2" width="1" height="1.6" fill="#cfcfcf"/>
<rect x="78.4" y="2" width="1" height="1.6" fill="#cfcfcf"/>
<rect x="80.6" y="2" width="1" height="1.6" fill="#cfcfcf"/>
<rect x="88.8" y="2" width="1" height="1.6" fill="#cfcfcf"/>
<rect x="91.0" y="2" width="1" height="1.6" fill="#cfcfcf"/>
<rect x="101.2" y="2" width="1" height="1.6" fill="#cfcfcf"/>
<rect x="103.4" y="2" width="1" height="1.6" fill="#cfcfcf"/>
<rect x="105.6" y="2" width="1" height="1.6" fill="#cfcfcf"/>
<rect x="113.8" y="2" width="1" height="1.6" fill="#cfcfcf"/>
<rect x="126.0" y="2" width="1" height="1.6" fill="#cfcfcf"/>
<rect x="128.2" y="2" width="1" height="1.6" fill="#cfcfcf"/>
<rect x="140.4" y="2" width="1" height="1.6" fill="#cfcfcf"/>
<rect x="142.6" y="2" width="1" height="1.6" fill="#cfcfcf"/>
<rect x="144.8" y="2" width="1" height="1.6" fill="#cfcfcf"/>
<rect x="155.0" y="2" width="1" height="1.6" fill="#cfcfcf"/>
<rect x="157.2" y="2" width="1" height="1.6" fill="#cfcfcf"/>
<rect x="169.4" y="2" width="1" height="1.6" fill="#cfcfcf"/>
<rect x="177.6" y="2" width="1" height="1.6" fill="#cfcfcf"/>
<rect x="179.8" y="2" width="1" height="1.6" fill="#cfcfcf"/>
<rect x="182.0" y="2" width="1" height="1.6" fill="#cfcfcf"/>
<rect x="190.2" y="2" width="1" height="1.6" fill="#cfcfcf"/>
<rect x="192.4" y="2" width="1" height="1.6" fill="#cfcfcf"/>
<rect x="194.6" y="2" width="1" height="1.6" fill="#cfcfcf"/>
<rect x="204.8" y="2" width="1" height="1.6" fill="#cfcfcf"/>
<rect x="207.0" y="2" width="1" height="1.6" fill="#cfcfcf"/>
<rect x="209.2" y="2" width="1" height="1.6" fill="#cfcfcf"/>
<rect x="217.4" y="2" width="1" height="1.6" fill="#cfcfcf"/>
<rect x="219.6" y="2" width="1" height="1.6" fill="#cfcfcf"/>
<rect x="221.8" y="2" width="1" height="1.6" fill="#cfcfcf"/>
<rect x="230.0" y="2" width="1" height="1.6" fill="#cfcfcf"/>
<rect x="242.2" y="2" width="1" height="1.6" fill="#cfcfcf"/>
<rect x="252.4" y="2" width="1" height="1.6" fill="#cfcfcf"/>
<rect x="262.6" y="2" width="1" height="1.6" fill="#cfcfcf"/>
<rect x="264.8" y="2" width="1" height="1.6" fill="#cfcfcf"/>
<rect x="277.0" y="2" width="1" height="1.6" fill="#cfcfcf"/>
<rect x="279.2" y="2" width="1" height="1.6" fill="#cfcfcf"/>
<rect x="281.4" y="2" width="1" height="1.6" fill="#cfcfcf"/>
<rect x="291.6" y="2" width="1" height="1.6" fill="#cfcfcf"/>
<rect x="293.8" y="2" width="1" height="1.6" fill="#cfcfcf"/>
<rect x="296.0" y="2" width="1" height="1.6" fill="#cfcfcf"/>
<rect x="306.2" y="2" width="1" height="1.6" fill="#cfcfcf"/>
<rect x="308.4" y="2" width="1" height="1.6" fill="#cfcfcf"/>
<rect x="320.6" y="2" width="1" height="1.6" fill="#cfcfcf"/>
<rect x="322.8" y="2" width="1" height="1.6" fill="#cfcfcf"/>
<rect x="325.0" y="2" width="1" height="1.6" fill="#cfcfcf"/>
<rect x="335.2" y="2" width="1" height="1.6" fill="#cfcfcf"/>
<rect x="345.4" y="2" width="1" height="1.6" fill="#cfcfcf"/>
<rect x="353.6" y="2" width="1" height="1.6" fill="#cfcfcf"/>
<rect x="363.8" y="2" width="1" height="1.6" fill="#cfcfcf"/>
<rect x="374.0" y="2" width="1" height="1.6" fill="#cfcfcf"/>
<rect x="376.2" y="2" width="1" height="1.6" fill="#cfcfcf"/>
<rect x="378.4" y="2" width="1" height="1.6" fill="#cfcfcf"/>
<rect x="388.6" y="2" width="1" height="1.6" fill="#cfcfcf"/>
<rect x="390.8" y="2" width="1" height="1.6" fill="#cfcfcf"/>
<rect x="393.0" y="2" width="1" height="1.6" fill="#cfcfcf"/>
<rect x="403.2" y="2" width="1" height="1.6" fill="#cfcfcf"/>
<rect x="405.4" y="2" width="1" height="1.6" fill="#cfcfcf"/>
<rect x="417.6" y="2" width="1" height="1.6" fill="#cfcfcf"/>
<rect x="419.8" y="2" width="1" height="1.6" fill="#cfcfcf"/>
<rect x="432.0" y="2" width="1" height="1.6" fill="#cfcfcf"/>
<rect x="434.2" y="2" width="1" height="1.6" fill="#cfcfcf"/>
<rect x="446.4" y="2" width="1" height="1.6" fill="#cfcfcf"/>
<rect x="448.6" y="2" width="1" height="1.6" fill="#cfcfcf"/>
<rect x="450.8" y="2" width="1" height="1.6" fill="#cfcfcf"/>
<path d="M6 1 L9 4 M8 9 L10 11 L6 11 Z" stroke="#aaa" stroke-width="0.7" fill="#ccc"/>
</svg>
<div class="a" style="left:417px;top:68.4px;width:498.1px;height:487px;background:#383838"></div>
<div class="a" style="left:418.2px;top:69.6px;width:495.7px;height:484px;background:linear-gradient(#4582b4,#ffffff 100%)"></div>
<svg class="a" style="left:0;top:0" width="925" height="553" viewBox="0 0 925 553">
<path d="M440.4 90.7 L441.7 93.2 L442.9 95.7 L444.2 98.2 L445.4 100.7 L446.5 103.2 L447.7 105.7 L448.8 108.3 L449.9 110.9 L451.0 113.5 L452.0 116.1 L453.1 118.7 L454.1 121.3 L455.1 123.9 L456.1 126.5 L457.1 129.2 L458.1 131.8 L459.2 134.4 L460.2 137.1 L461.2 139.7 L462.2 142.3 L463.2 145.0 L464.2 147.6 L465.2 150.2 L466.3 152.9 L467.3 155.5 L468.4 158.1 L469.5 160.7 L470.6 163.3 L471.8 165.9 L472.9 168.5 L474.1 171.0 L475.3 173.6 L476.6 176.1 L477.8 178.7 L479.1 181.2 L480.3 183.7 L481.6 186.2 L483.0 188.7 L484.3 191.1 L485.7 193.6 L487.0 196.1 L488.5 198.5 L489.9 200.9 L491.3 203.3 L492.8 205.7 L494.3 208.1 L495.8 210.5 L497.3 212.9 L498.8 215.2 L500.4 217.5 L502.0 219.9 L503.6 222.2 L505.2 224.5 L506.9 226.7 L508.5 229.0 L510.2 231.2 L511.9 233.4 L513.6 235.7 L515.4 237.9 L517.2 240.0 L518.9 242.2 L520.7 244.3 L522.6 246.5 L524.4 248.6 L526.3 250.7 L528.1 252.8 L530.0 254.8 L531.9 256.9 L533.9 258.9 L535.8 260.9 L537.8 262.9 L539.8 264.9 L541.8 266.9 L543.8 268.9 L545.8 270.8 L547.9 272.7 L549.9 274.6 L552.0 276.5 L554.1 278.4 L556.2 280.3 L558.3 282.1 L560.5 284.0 L562.6 285.8 L564.8 287.6 L567.0 289.4 L569.1 291.2 L571.4 292.9 L573.6 294.7 L575.8 296.4 L578.0 298.1 L580.3 299.8 L582.6 301.5 L584.9 303.1 L587.1 304.8 L589.4 306.4 L591.8 308.1 L594.1 309.7 L596.4 311.3 L598.8 312.8 L601.1 314.4 L603.5 315.9 L605.9 317.5 L608.3 319.0 L610.6 320.5 L613.1 322.0 L615.5 323.5 L617.9 324.9 L620.3 326.4 L622.8 327.8 L625.2 329.2 L627.7 330.6 L630.1 332.0 L632.6 333.4 L635.1 334.7 L637.5 336.1 L640.0 337.4 L642.5 338.7 L645.0 340.0 L647.5 341.3 L650.0 342.6 L652.6 343.8 L655.1 345.1 L657.6 346.3 L660.1 347.5 L662.7 348.7 L665.2 349.9 L667.8 351.1 L670.3 352.3 L672.9 353.4 L675.4 354.6 L678.0 355.7 L680.6 356.9 L683.1 358.0 L685.7 359.1 L688.3 360.2 L690.9 361.3 L693.5 362.4 L696.1 363.5 L698.6 364.6 L701.2 365.6 L703.8 366.7 L706.4 367.7 L709.0 368.8 L711.7 369.8 L714.3 370.9 L716.9 371.9 L719.5 373.0 L722.1 374.0 L724.7 375.0 L727.3 376.0 L730.0 377.1 L732.6 378.1 L735.2 379.1 L737.8 380.1 L740.4 381.1 L743.1 382.2 L745.7 383.2 L748.3 384.2 L750.9 385.2 L753.6 386.2 L756.2 387.2 L758.8 388.3 L761.4 389.3 L764.1 390.3 L766.7 391.3 L769.3 392.3 L771.9 393.4 L774.6 394.4 L777.2 395.5 L779.8 396.5 L782.4 397.5 L785.0 398.6 L787.6 399.7 L790.3 400.7 L792.9 401.8 L795.5 402.9 L798.1 404.0 L800.7 405.0 L803.3 406.1 L805.9 407.3 L808.5 408.4 L811.1 409.5 L813.7 410.6 L816.3 411.7 L818.9 412.9 L821.4 414.0 L824.0 415.2 L826.6 416.3 L829.2 417.5 L831.8 418.7 L834.3 419.8 L836.9 421.0 L839.5 422.2 L842.0 423.4 L844.6 424.6 L847.2 425.8 L849.7 427.0 L852.3 428.2 L854.8 429.4 L857.4 430.6 L859.9 431.8 L862.4 433.0 L865.0 434.3 L867.5 435.5 L870.0 436.7 L872.6 437.9 L875.1 439.2 L877.5 440.5 L879.9 441.9 L882.3 443.3 L884.5 444.9 L886.6 446.6 L888.6 448.4 L890.4 450.5 Q897 458 889.0 466.3 L886.7 468.8 L884.3 471.1 L881.7 473.4 L879.0 475.6 L876.3 477.8 L873.5 479.9 L870.7 481.9 L867.8 483.9 L864.8 485.9 L861.8 487.8 L858.7 489.7 L855.6 491.5 L852.5 493.3 L849.3 495.1 L846.1 496.8 L842.9 498.5 L839.7 500.1 L836.4 501.8 L833.1 503.4 L829.9 505.0 L826.6 506.5 L823.3 508.0 L820.0 509.5 L816.7 511.0 L813.4 512.4 L810.1 513.8 L806.8 515.2 L803.4 516.5 L800.1 517.8 L796.8 519.1 L793.4 520.3 L790.1 521.5 L786.7 522.6 L783.3 523.7 L779.9 524.8 L776.6 525.8 L773.2 526.7 L769.8 527.7 L766.4 528.5 L762.9 529.4 L759.5 530.1 L756.1 530.8 L752.7 531.5 L749.2 532.1 L745.8 532.7 L742.3 533.2 L738.8 533.7 L735.3 534.1 L731.9 534.4 L728.4 534.7 L724.9 534.9 L721.3 535.0 L717.8 535.1 L714.3 535.1 L710.8 535.1 L707.2 535.0 L703.7 534.8 L700.1 534.6 L696.5 534.3 L693.0 533.9 L689.4 533.5 L685.8 533.0 L682.3 532.4 L678.7 531.8 L675.2 531.1 L671.6 530.3 L668.1 529.5 L664.6 528.7 L661.1 527.7 L657.6 526.7 L654.1 525.7 L650.7 524.6 L647.2 523.4 L643.8 522.2 L640.4 520.9 L637.1 519.5 L633.7 518.1 L630.4 516.7 L627.1 515.2 L623.9 513.6 L620.7 512.0 L617.5 510.3 L614.3 508.5 L611.2 506.8 L608.1 504.9 L605.1 503.0 L602.1 501.1 L599.2 499.1 L596.2 497.0 L593.4 494.9 L590.5 492.8 L587.7 490.6 L584.9 488.4 L582.2 486.1 L579.5 483.8 L576.9 481.4 L574.3 479.0 L571.7 476.6 L569.1 474.1 L566.6 471.6 L564.2 469.0 L561.8 466.5 L559.4 463.8 L557.0 461.2 L554.7 458.5 L552.5 455.7 L550.2 453.0 L548.1 450.2 L545.9 447.4 L543.8 444.5 L541.7 441.6 L539.7 438.7 L537.7 435.8 L535.8 432.8 L533.8 429.8 L532.0 426.8 L530.1 423.8 L528.3 420.7 L526.6 417.7 L524.9 414.6 L523.2 411.5 L521.5 408.3 L519.9 405.2 L518.4 402.0 L516.8 398.8 L515.3 395.6 L513.9 392.4 L512.4 389.2 L511.0 385.9 L509.7 382.7 L508.3 379.4 L507.0 376.1 L505.7 372.8 L504.4 369.5 L503.2 366.1 L502.0 362.8 L500.8 359.4 L499.7 356.1 L498.5 352.7 L497.4 349.3 L496.3 345.9 L495.2 342.5 L494.2 339.0 L493.1 335.6 L492.1 332.2 L491.1 328.7 L490.1 325.3 L489.2 321.8 L488.2 318.4 L487.3 314.9 L486.3 311.4 L485.4 307.9 L484.5 304.5 L483.6 301.0 L482.7 297.5 L481.9 294.0 L481.0 290.5 L480.1 287.0 L479.3 283.5 L478.4 280.0 L477.6 276.5 L476.7 273.0 L475.9 269.5 L475.1 266.0 L474.2 262.5 L473.4 259.0 L472.6 255.5 L471.7 252.0 L470.9 248.6 L470.0 245.1 L469.2 241.6 L468.3 238.1 L467.5 234.7 L466.6 231.2 L465.8 227.8 L464.9 224.3 L464.0 220.9 L463.1 217.5 L462.2 214.0 L461.3 210.6 L460.4 207.2 L459.4 203.8 L458.5 200.4 L457.6 197.0 L456.6 193.6 L455.7 190.2 L454.8 186.8 L453.8 183.4 L452.9 180.0 L452.0 176.6 L451.1 173.2 L450.2 169.8 L449.3 166.4 L448.4 162.9 L447.5 159.5 L446.6 156.0 L445.8 152.6 L445.0 149.1 L444.2 145.6 L443.4 142.1 L442.6 138.6 L441.9 135.1 L441.1 131.5 L440.5 128.0 L439.8 124.4 L439.2 120.8 L438.6 117.2 L438.1 113.6 L437.7 110.0 L437.3 106.5 L437.1 103.0 L436.9 99.5 L436.9 96.0 L437.0 92.6 L437.3 89.2 A3.2 3.2 0 0 1 440.4 90.7 Z" fill="none" stroke="#232e98" stroke-width="2.7" stroke-opacity="0.95" stroke-linejoin="round"/>
<path d="M440.4 90.7 L441.7 93.2 L442.9 95.7 L444.2 98.2 L445.4 100.7 L446.5 103.2 L447.7 105.7 L448.8 108.3 L449.9 110.9 L451.0 113.5 L452.0 116.1 L453.1 118.7 L454.1 121.3 L455.1 123.9 L456.1 126.5 L457.1 129.2 L458.1 131.8 L459.2 134.4 L460.2 137.1 L461.2 139.7 L462.2 142.3 L463.2 145.0 L464.2 147.6 L465.2 150.2 L466.3 152.9 L467.3 155.5 L468.4 158.1 L469.5 160.7 L470.6 163.3 L471.8 165.9 L472.9 168.5 L474.1 171.0 L475.3 173.6 L476.6 176.1 L477.8 178.7 L479.1 181.2 L480.3 183.7 L481.6 186.2 L483.0 188.7 L484.3 191.1 L485.7 193.6 L487.0 196.1 L488.5 198.5 L489.9 200.9 L491.3 203.3 L492.8 205.7 L494.3 208.1 L495.8 210.5 L497.3 212.9 L498.8 215.2 L500.4 217.5 L502.0 219.9 L503.6 222.2 L505.2 224.5 L506.9 226.7 L508.5 229.0 L510.2 231.2 L511.9 233.4 L513.6 235.7 L515.4 237.9 L517.2 240.0 L518.9 242.2 L520.7 244.3 L522.6 246.5 L524.4 248.6 L526.3 250.7 L528.1 252.8 L530.0 254.8 L531.9 256.9 L533.9 258.9 L535.8 260.9 L537.8 262.9 L539.8 264.9 L541.8 266.9 L543.8 268.9 L545.8 270.8 L547.9 272.7 L549.9 274.6 L552.0 276.5 L554.1 278.4 L556.2 280.3 L558.3 282.1 L560.5 284.0 L562.6 285.8 L564.8 287.6 L567.0 289.4 L569.1 291.2 L571.4 292.9 L573.6 294.7 L575.8 296.4 L578.0 298.1 L580.3 299.8 L582.6 301.5 L584.9 303.1 L587.1 304.8 L589.4 306.4 L591.8 308.1 L594.1 309.7 L596.4 311.3 L598.8 312.8 L601.1 314.4 L603.5 315.9 L605.9 317.5 L608.3 319.0 L610.6 320.5 L613.1 322.0 L615.5 323.5 L617.9 324.9 L620.3 326.4 L622.8 327.8 L625.2 329.2 L627.7 330.6 L630.1 332.0 L632.6 333.4 L635.1 334.7 L637.5 336.1 L640.0 337.4 L642.5 338.7 L645.0 340.0 L647.5 341.3 L650.0 342.6 L652.6 343.8 L655.1 345.1 L657.6 346.3 L660.1 347.5 L662.7 348.7 L665.2 349.9 L667.8 351.1 L670.3 352.3 L672.9 353.4 L675.4 354.6 L678.0 355.7 L680.6 356.9 L683.1 358.0 L685.7 359.1 L688.3 360.2 L690.9 361.3 L693.5 362.4 L696.1 363.5 L698.6 364.6 L701.2 365.6 L703.8 366.7 L706.4 367.7 L709.0 368.8 L711.7 369.8 L714.3 370.9 L716.9 371.9 L719.5 373.0 L722.1 374.0 L724.7 375.0 L727.3 376.0 L730.0 377.1 L732.6 378.1 L735.2 379.1 L737.8 380.1 L740.4 381.1 L743.1 382.2 L745.7 383.2 L748.3 384.2 L750.9 385.2 L753.6 386.2 L756.2 387.2 L758.8 388.3 L761.4 389.3 L764.1 390.3 L766.7 391.3 L769.3 392.3 L771.9 393.4 L774.6 394.4 L777.2 395.5 L779.8 396.5 L782.4 397.5 L785.0 398.6 L787.6 399.7 L790.3 400.7 L792.9 401.8 L795.5 402.9 L798.1 404.0 L800.7 405.0 L803.3 406.1 L805.9 407.3 L808.5 408.4 L811.1 409.5 L813.7 410.6 L816.3 411.7 L818.9 412.9 L821.4 414.0 L824.0 415.2 L826.6 416.3 L829.2 417.5 L831.8 418.7 L834.3 419.8 L836.9 421.0 L839.5 422.2 L842.0 423.4 L844.6 424.6 L847.2 425.8 L849.7 427.0 L852.3 428.2 L854.8 429.4 L857.4 430.6 L859.9 431.8 L862.4 433.0 L865.0 434.3 L867.5 435.5 L870.0 436.7 L872.6 437.9 L875.1 439.2 L877.5 440.5 L879.9 441.9 L882.3 443.3 L884.5 444.9 L886.6 446.6 L888.6 448.4 L890.4 450.5 Q897 458 889.0 466.3 L886.7 468.8 L884.3 471.1 L881.7 473.4 L879.0 475.6 L876.3 477.8 L873.5 479.9 L870.7 481.9 L867.8 483.9 L864.8 485.9 L861.8 487.8 L858.7 489.7 L855.6 491.5 L852.5 493.3 L849.3 495.1 L846.1 496.8 L842.9 498.5 L839.7 500.1 L836.4 501.8 L833.1 503.4 L829.9 505.0 L826.6 506.5 L823.3 508.0 L820.0 509.5 L816.7 511.0 L813.4 512.4 L810.1 513.8 L806.8 515.2 L803.4 516.5 L800.1 517.8 L796.8 519.1 L793.4 520.3 L790.1 521.5 L786.7 522.6 L783.3 523.7 L779.9 524.8 L776.6 525.8 L773.2 526.7 L769.8 527.7 L766.4 528.5 L762.9 529.4 L759.5 530.1 L756.1 530.8 L752.7 531.5 L749.2 532.1 L745.8 532.7 L742.3 533.2 L738.8 533.7 L735.3 534.1 L731.9 534.4 L728.4 534.7 L724.9 534.9 L721.3 535.0 L717.8 535.1 L714.3 535.1 L710.8 535.1 L707.2 535.0 L703.7 534.8 L700.1 534.6 L696.5 534.3 L693.0 533.9 L689.4 533.5 L685.8 533.0 L682.3 532.4 L678.7 531.8 L675.2 531.1 L671.6 530.3 L668.1 529.5 L664.6 528.7 L661.1 527.7 L657.6 526.7 L654.1 525.7 L650.7 524.6 L647.2 523.4 L643.8 522.2 L640.4 520.9 L637.1 519.5 L633.7 518.1 L630.4 516.7 L627.1 515.2 L623.9 513.6 L620.7 512.0 L617.5 510.3 L614.3 508.5 L611.2 506.8 L608.1 504.9 L605.1 503.0 L602.1 501.1 L599.2 499.1 L596.2 497.0 L593.4 494.9 L590.5 492.8 L587.7 490.6 L584.9 488.4 L582.2 486.1 L579.5 483.8 L576.9 481.4 L574.3 479.0 L571.7 476.6 L569.1 474.1 L566.6 471.6 L564.2 469.0 L561.8 466.5 L559.4 463.8 L557.0 461.2 L554.7 458.5 L552.5 455.7 L550.2 453.0 L548.1 450.2 L545.9 447.4 L543.8 444.5 L541.7 441.6 L539.7 438.7 L537.7 435.8 L535.8 432.8 L533.8 429.8 L532.0 426.8 L530.1 423.8 L528.3 420.7 L526.6 417.7 L524.9 414.6 L523.2 411.5 L521.5 408.3 L519.9 405.2 L518.4 402.0 L516.8 398.8 L515.3 395.6 L513.9 392.4 L512.4 389.2 L511.0 385.9 L509.7 382.7 L508.3 379.4 L507.0 376.1 L505.7 372.8 L504.4 369.5 L503.2 366.1 L502.0 362.8 L500.8 359.4 L499.7 356.1 L498.5 352.7 L497.4 349.3 L496.3 345.9 L495.2 342.5 L494.2 339.0 L493.1 335.6 L492.1 332.2 L491.1 328.7 L490.1 325.3 L489.2 321.8 L488.2 318.4 L487.3 314.9 L486.3 311.4 L485.4 307.9 L484.5 304.5 L483.6 301.0 L482.7 297.5 L481.9 294.0 L481.0 290.5 L480.1 287.0 L479.3 283.5 L478.4 280.0 L477.6 276.5 L476.7 273.0 L475.9 269.5 L475.1 266.0 L474.2 262.5 L473.4 259.0 L472.6 255.5 L471.7 252.0 L470.9 248.6 L470.0 245.1 L469.2 241.6 L468.3 238.1 L467.5 234.7 L466.6 231.2 L465.8 227.8 L464.9 224.3 L464.0 220.9 L463.1 217.5 L462.2 214.0 L461.3 210.6 L460.4 207.2 L459.4 203.8 L458.5 200.4 L457.6 197.0 L456.6 193.6 L455.7 190.2 L454.8 186.8 L453.8 183.4 L452.9 180.0 L452.0 176.6 L451.1 173.2 L450.2 169.8 L449.3 166.4 L448.4 162.9 L447.5 159.5 L446.6 156.0 L445.8 152.6 L445.0 149.1 L444.2 145.6 L443.4 142.1 L442.6 138.6 L441.9 135.1 L441.1 131.5 L440.5 128.0 L439.8 124.4 L439.2 120.8 L438.6 117.2 L438.1 113.6 L437.7 110.0 L437.3 106.5 L437.1 103.0 L436.9 99.5 L436.9 96.0 L437.0 92.6 L437.3 89.2 A3.2 3.2 0 0 1 440.4 90.7 Z" fill="none" stroke="#e8eef5" stroke-width="1.2" stroke-opacity="0.5"/>
<path d="M440.4 90.7 L441.7 93.2 L442.9 95.7 L444.2 98.2 L445.4 100.7 L446.5 103.2 L447.7 105.7 L448.8 108.3 L449.9 110.9 L451.0 113.5 L452.0 116.1 L453.1 118.7 L454.1 121.3 L455.1 123.9 L456.1 126.5 L457.1 129.2 L458.1 131.8 L459.2 134.4 L460.2 137.1 L461.2 139.7 L462.2 142.3 L463.2 145.0 L464.2 147.6 L465.2 150.2 L466.3 152.9 L467.3 155.5 L468.4 158.1 L469.5 160.7 L470.6 163.3 L471.8 165.9 L472.9 168.5 L474.1 171.0 L475.3 173.6 L476.6 176.1 L477.8 178.7 L479.1 181.2 L480.3 183.7 L481.6 186.2 L483.0 188.7 L484.3 191.1 L485.7 193.6 L487.0 196.1 L488.5 198.5 L489.9 200.9 L491.3 203.3 L492.8 205.7 L494.3 208.1 L495.8 210.5 L497.3 212.9 L498.8 215.2 L500.4 217.5 L502.0 219.9 L503.6 222.2 L505.2 224.5 L506.9 226.7 L508.5 229.0 L510.2 231.2 L511.9 233.4 L513.6 235.7 L515.4 237.9 L517.2 240.0 L518.9 242.2 L520.7 244.3 L522.6 246.5 L524.4 248.6 L526.3 250.7 L528.1 252.8 L530.0 254.8 L531.9 256.9 L533.9 258.9 L535.8 260.9 L537.8 262.9 L539.8 264.9 L541.8 266.9 L543.8 268.9 L545.8 270.8 L547.9 272.7 L549.9 274.6 L552.0 276.5 L554.1 278.4 L556.2 280.3 L558.3 282.1 L560.5 284.0 L562.6 285.8 L564.8 287.6 L567.0 289.4 L569.1 291.2 L571.4 292.9 L573.6 294.7 L575.8 296.4 L578.0 298.1 L580.3 299.8 L582.6 301.5 L584.9 303.1 L587.1 304.8 L589.4 306.4 L591.8 308.1 L594.1 309.7 L596.4 311.3 L598.8 312.8 L601.1 314.4 L603.5 315.9 L605.9 317.5 L608.3 319.0 L610.6 320.5 L613.1 322.0 L615.5 323.5 L617.9 324.9 L620.3 326.4 L622.8 327.8 L625.2 329.2 L627.7 330.6 L630.1 332.0 L632.6 333.4 L635.1 334.7 L637.5 336.1 L640.0 337.4 L642.5 338.7 L645.0 340.0 L647.5 341.3 L650.0 342.6 L652.6 343.8 L655.1 345.1 L657.6 346.3 L660.1 347.5 L662.7 348.7 L665.2 349.9 L667.8 351.1 L670.3 352.3 L672.9 353.4 L675.4 354.6 L678.0 355.7 L680.6 356.9 L683.1 358.0 L685.7 359.1 L688.3 360.2 L690.9 361.3 L693.5 362.4 L696.1 363.5 L698.6 364.6 L701.2 365.6 L703.8 366.7 L706.4 367.7 L709.0 368.8 L711.7 369.8 L714.3 370.9 L716.9 371.9 L719.5 373.0 L722.1 374.0 L724.7 375.0 L727.3 376.0 L730.0 377.1 L732.6 378.1 L735.2 379.1 L737.8 380.1 L740.4 381.1 L743.1 382.2 L745.7 383.2 L748.3 384.2 L750.9 385.2 L753.6 386.2 L756.2 387.2 L758.8 388.3 L761.4 389.3 L764.1 390.3 L766.7 391.3 L769.3 392.3 L771.9 393.4 L774.6 394.4 L777.2 395.5 L779.8 396.5 L782.4 397.5 L785.0 398.6 L787.6 399.7 L790.3 400.7 L792.9 401.8 L795.5 402.9 L798.1 404.0 L800.7 405.0 L803.3 406.1 L805.9 407.3 L808.5 408.4 L811.1 409.5 L813.7 410.6 L816.3 411.7 L818.9 412.9 L821.4 414.0 L824.0 415.2 L826.6 416.3 L829.2 417.5 L831.8 418.7 L834.3 419.8 L836.9 421.0 L839.5 422.2 L842.0 423.4 L844.6 424.6 L847.2 425.8 L849.7 427.0 L852.3 428.2 L854.8 429.4 L857.4 430.6 L859.9 431.8 L862.4 433.0 L865.0 434.3 L867.5 435.5 L870.0 436.7 L872.6 437.9 L875.1 439.2 L877.5 440.5 L879.9 441.9 L882.3 443.3 L884.5 444.9 L886.6 446.6 L888.6 448.4 L890.4 450.5 Q897 458 889.0 466.3 L886.7 468.8 L884.3 471.1 L881.7 473.4 L879.0 475.6 L876.3 477.8 L873.5 479.9 L870.7 481.9 L867.8 483.9 L864.8 485.9 L861.8 487.8 L858.7 489.7 L855.6 491.5 L852.5 493.3 L849.3 495.1 L846.1 496.8 L842.9 498.5 L839.7 500.1 L836.4 501.8 L833.1 503.4 L829.9 505.0 L826.6 506.5 L823.3 508.0 L820.0 509.5 L816.7 511.0 L813.4 512.4 L810.1 513.8 L806.8 515.2 L803.4 516.5 L800.1 517.8 L796.8 519.1 L793.4 520.3 L790.1 521.5 L786.7 522.6 L783.3 523.7 L779.9 524.8 L776.6 525.8 L773.2 526.7 L769.8 527.7 L766.4 528.5 L762.9 529.4 L759.5 530.1 L756.1 530.8 L752.7 531.5 L749.2 532.1 L745.8 532.7 L742.3 533.2 L738.8 533.7 L735.3 534.1 L731.9 534.4 L728.4 534.7 L724.9 534.9 L721.3 535.0 L717.8 535.1 L714.3 535.1 L710.8 535.1 L707.2 535.0 L703.7 534.8 L700.1 534.6 L696.5 534.3 L693.0 533.9 L689.4 533.5 L685.8 533.0 L682.3 532.4 L678.7 531.8 L675.2 531.1 L671.6 530.3 L668.1 529.5 L664.6 528.7 L661.1 527.7 L657.6 526.7 L654.1 525.7 L650.7 524.6 L647.2 523.4 L643.8 522.2 L640.4 520.9 L637.1 519.5 L633.7 518.1 L630.4 516.7 L627.1 515.2 L623.9 513.6 L620.7 512.0 L617.5 510.3 L614.3 508.5 L611.2 506.8 L608.1 504.9 L605.1 503.0 L602.1 501.1 L599.2 499.1 L596.2 497.0 L593.4 494.9 L590.5 492.8 L587.7 490.6 L584.9 488.4 L582.2 486.1 L579.5 483.8 L576.9 481.4 L574.3 479.0 L571.7 476.6 L569.1 474.1 L566.6 471.6 L564.2 469.0 L561.8 466.5 L559.4 463.8 L557.0 461.2 L554.7 458.5 L552.5 455.7 L550.2 453.0 L548.1 450.2 L545.9 447.4 L543.8 444.5 L541.7 441.6 L539.7 438.7 L537.7 435.8 L535.8 432.8 L533.8 429.8 L532.0 426.8 L530.1 423.8 L528.3 420.7 L526.6 417.7 L524.9 414.6 L523.2 411.5 L521.5 408.3 L519.9 405.2 L518.4 402.0 L516.8 398.8 L515.3 395.6 L513.9 392.4 L512.4 389.2 L511.0 385.9 L509.7 382.7 L508.3 379.4 L507.0 376.1 L505.7 372.8 L504.4 369.5 L503.2 366.1 L502.0 362.8 L500.8 359.4 L499.7 356.1 L498.5 352.7 L497.4 349.3 L496.3 345.9 L495.2 342.5 L494.2 339.0 L493.1 335.6 L492.1 332.2 L491.1 328.7 L490.1 325.3 L489.2 321.8 L488.2 318.4 L487.3 314.9 L486.3 311.4 L485.4 307.9 L484.5 304.5 L483.6 301.0 L482.7 297.5 L481.9 294.0 L481.0 290.5 L480.1 287.0 L479.3 283.5 L478.4 280.0 L477.6 276.5 L476.7 273.0 L475.9 269.5 L475.1 266.0 L474.2 262.5 L473.4 259.0 L472.6 255.5 L471.7 252.0 L470.9 248.6 L470.0 245.1 L469.2 241.6 L468.3 238.1 L467.5 234.7 L466.6 231.2 L465.8 227.8 L464.9 224.3 L464.0 220.9 L463.1 217.5 L462.2 214.0 L461.3 210.6 L460.4 207.2 L459.4 203.8 L458.5 200.4 L457.6 197.0 L456.6 193.6 L455.7 190.2 L454.8 186.8 L453.8 183.4 L452.9 180.0 L452.0 176.6 L451.1 173.2 L450.2 169.8 L449.3 166.4 L448.4 162.9 L447.5 159.5 L446.6 156.0 L445.8 152.6 L445.0 149.1 L444.2 145.6 L443.4 142.1 L442.6 138.6 L441.9 135.1 L441.1 131.5 L440.5 128.0 L439.8 124.4 L439.2 120.8 L438.6 117.2 L438.1 113.6 L437.7 110.0 L437.3 106.5 L437.1 103.0 L436.9 99.5 L436.9 96.0 L437.0 92.6 L437.3 89.2 A3.2 3.2 0 0 1 440.4 90.7 Z" fill="none" stroke="#e02828" stroke-width="0.8"/>
</svg>
<div class="t" style="left:840px;top:510.5px;width:71px;text-align:right;font-size:9.5px;color:#1a1a1a;-webkit-text-stroke:0.15px #1a1a1a">-8.061</div>
<div class="t" style="left:840px;top:524.4px;width:71px;text-align:right;font-size:9.5px;color:#1a1a1a;-webkit-text-stroke:0.15px #1a1a1a">8.634</div>
<div class="t" style="left:840px;top:539.4px;width:71px;text-align:right;font-size:9.4px;color:#1a1a1a;-webkit-text-stroke:0.15px #1a1a1a">484.952</div>
<div class="t" style="left:868.5px;top:511.30px;font-size:8px;font-weight:bold;color:#1a1a1a;">X</div>
<div class="t" style="left:868.8px;top:525.45px;font-size:7.5px;font-weight:bold;color:#444;">Y</div>
<div class="t" style="left:869.3px;top:539.35px;font-size:9.5px;color:#1a1a1a;-webkit-text-stroke:0.2px #1a1a1a">Z</div>
<div class="a" style="left:915.5px;top:19px;width:9.5px;height:534px;background:#f0f0f0"></div>
<div class="a" style="left:918.8px;top:21.5px;width:8px;height:8px;border:1px solid #d0d0d0;border-radius:50%;background:#f6f6f6"></div>
<svg class="a" style="left:918.8px;top:21.5px" width="8" height="8" viewBox="0 0 8 8"><path d="M4.6 2.2 L2.8 4 L4.6 5.8" stroke="#333" stroke-width="1" fill="none"/></svg>
<div class="t" style="left:919.8px;top:155.8px;font-size:6.6px;color:#333;transform:rotate(-90deg);transform-origin:0 0">Section information &amp; Coordinate System</div>
</div></body></html>
